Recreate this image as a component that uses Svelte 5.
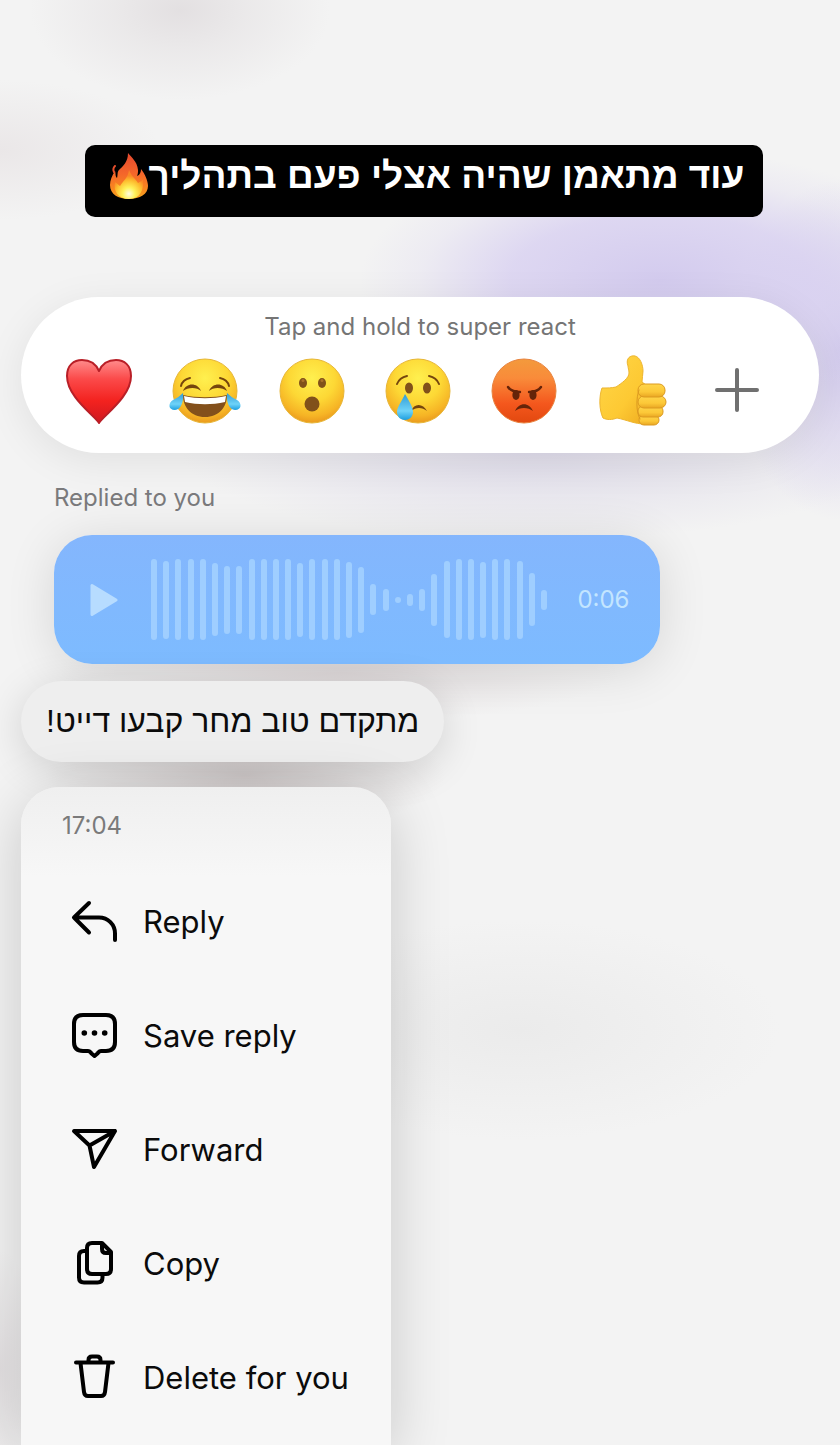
<script>
  const bars = [81, 78, 81, 81, 81, 73, 68, 68, 81, 81, 81, 81, 74, 81, 81, 81, 76, 66, 31, 22, 6, 12, 22, 52, 77, 81, 81, 76, 81, 81, 78, 53, 20];
  const actions = [
    { id: 'reply', label: 'Reply' },
    { id: 'save', label: 'Save reply' },
    { id: 'forward', label: 'Forward' },
    { id: 'copy', label: 'Copy' },
    { id: 'delete', label: 'Delete for you' }
  ];
  const reactions = ['Love', 'Laugh', 'Wow', 'Sad', 'Angry', 'Like'];
</script>

<svg class="defs" aria-hidden="true">
  <defs>
    <radialGradient id="face" cx="50%" cy="30%" r="72%">
      <stop offset="0" stop-color="#fff04f" /><stop offset=".5" stop-color="#fdd835" /><stop offset=".82" stop-color="#f6b425" /><stop offset="1" stop-color="#e8951c" />
    </radialGradient>
    <linearGradient id="mad" x1="0" y1="0" x2="0" y2="1">
      <stop offset="0" stop-color="#f39a3c" /><stop offset=".3" stop-color="#f98b3a" /><stop offset=".7" stop-color="#f4571d" /><stop offset="1" stop-color="#e2480f" />
    </linearGradient>
    <linearGradient id="heart" x1="0" y1="0" x2="0" y2="1">
      <stop offset="0" stop-color="#ff8c8c" /><stop offset=".3" stop-color="#fb4a4a" /><stop offset=".65" stop-color="#f3221f" /><stop offset="1" stop-color="#cf1820" />
    </linearGradient>
    <linearGradient id="tear" x1="0" y1="0" x2="0" y2="1">
      <stop offset="0" stop-color="#2f9bd6" /><stop offset=".65" stop-color="#6fd3f8" /><stop offset="1" stop-color="#1d9fe0" />
    </linearGradient>
    <linearGradient id="hand" x1="0" y1="0" x2="1" y2="1">
      <stop offset="0" stop-color="#ffd748" /><stop offset=".6" stop-color="#fdc933" /><stop offset="1" stop-color="#eda91f" />
    </linearGradient>
    <linearGradient id="finger" x1="0" y1="0" x2="0" y2="1">
      <stop offset="0" stop-color="#ffd54a" /><stop offset=".6" stop-color="#fcc838" /><stop offset="1" stop-color="#e9a623" />
    </linearGradient>
    <linearGradient id="flame" x1="0" y1="0" x2="0" y2="1">
      <stop offset="0" stop-color="#e5482e" /><stop offset=".45" stop-color="#f4662a" /><stop offset=".8" stop-color="#f98a1f" /><stop offset="1" stop-color="#f3a51e" />
    </linearGradient>
    <radialGradient id="core" cx="50%" cy="82%" r="62%">
      <stop offset="0" stop-color="#fffde0" /><stop offset=".35" stop-color="#fff25a" /><stop offset=".75" stop-color="#fdbb2d" /><stop offset="1" stop-color="#f98725" />
    </radialGradient>
  </defs>
</svg>

<main>
  <h1 class="caption" dir="rtl">
    <span>עוד מתאמן שהיה אצלי פעם בתהליך</span><svg class="fire" viewBox="0 0 40 48" role="img" aria-label="Fire">
      <path fill="url(#flame)" d="M19 1c3 4 9 8 10 17 0 2 0 4-1 6 3-1 4-4 4-7 4 5 7 12 7 17 0 8-8 13-19 13S1 42 1 33c0-5 2-9 5-14 1 3 0 5 2 7 1-3 0-6 2-8 4-4 9-8 9-17z" />
      <path fill="none" stroke="#e64f2d" stroke-width="2" stroke-linecap="round" d="M6 14c-2 2-2 4-1 6" />
      <path fill="url(#core)" d="M20 18c2 6 7 9 9 13l5-3c1 10-3 19-14 19S4 39 6 30c2 1 3 3 5 4 3-5 8-8 9-16z" />
    </svg>
  </h1>

  <section class="reactions" aria-label="Reactions">
    <p>Tap and hold to super react</p>
    <div class="row">
      {#each reactions as name}
        <button aria-label={name}>
          <svg viewBox="0 0 72 72" aria-hidden="true">
            {#if name === 'Love'}
              <path d="M36 68C31 60 4 42 4 21 4 10 11 5 19 5c8 0 14 4 17 11C39 9 45 5 53 5c8 0 15 5 15 16 0 21-27 39-32 47z" fill="url(#heart)" stroke="#b91f27" stroke-width="2" stroke-linejoin="round" />
            {:else if name === 'Like'}
              <g transform="translate(1)">
                <path d="M32 11C29 3 35 0 39 1c5 1 8 9 8 15 0 4-1 7-1 11l8 6-6 36c-9 0-17-4-27-6-5 2-10 2-14 0-4-8-4-22-1-30 6 0 9 0 14-1 6-4 13-9 13-14 0-3-1-5-1-7z" fill="url(#hand)" stroke="#edb530" />
                <g fill="url(#finger)" stroke="#dc9a20">
                  <rect x="43" y="60" width="20" height="10" rx="5" />
                  <rect x="42" y="51" width="25" height="11" rx="5" />
                  <rect x="42" y="41" width="28" height="12" rx="6" />
                  <rect x="42" y="29" width="27" height="13" rx="6" />
                </g>
                <path d="M43 35c-3 8-3 22 1 29" fill="none" stroke="#dc9a20" stroke-width="1" stroke-linecap="round" />
              </g>
            {:else}
              <circle cx="36" cy="36" r="32" fill={name === 'Angry' ? 'url(#mad)' : 'url(#face)'} stroke={name === 'Angry' ? '#e8833f' : '#e7b637'} />
              {#if name === 'Laugh'}
                <path fill="none" stroke="#75450d" stroke-width="2" stroke-linecap="round" d="M12 31c1-4 4-7 9-8M60 31c-1-4-4-7-9-8" />
                <path fill="#75450d" d="M14 36c3-8 14-9 18 0-4-4-13-4-18 0zM40 36c4-9 15-8 18 0-5-4-14-4-18 0z" />
                <path fill="#83501b" d="M14 40c13 3 31 3 44 0 0 12-8 22-22 22S14 52 14 40z" />
                <path fill="#fff" d="M15 41c13 3 29 3 42 0l-1 6c-13 3-27 3-40 0z" />
                <path fill="url(#tear)" d="M14 38c1 8-2 17-8 17-7 0-7-7-2-10 4-2 7-4 10-7zM58 38c-1 8 2 17 8 17 7 0 7-7 2-10-4-2-7-4-10-7z" />
              {:else if name === 'Wow'}
                <g fill="#81511a"><ellipse cx="27" cy="28" rx="4" ry="5" /><ellipse cx="46" cy="28" rx="4" ry="5" /><ellipse cx="36" cy="49" rx="7.500" ry="7.500" /></g>
                <g fill="#aa712b"><circle cx="27" cy="25.500" r="1.500" /><circle cx="46" cy="25.500" r="1.500" /></g>
              {:else if name === 'Sad'}
                <g fill="#81511a"><ellipse cx="27" cy="33" rx="4" ry="5.500" /><ellipse cx="45" cy="33" rx="4" ry="5.500" /></g>
                <path fill="none" stroke="#75450d" stroke-width="2" stroke-linecap="round" d="M15 29c2-5 5-7 10-8M57 29c-2-5-5-7-10-8" />
                <path fill="#75450d" d="M29 56c3-8 12-8 16 0-5-4-11-4-16 0z" />
                <path fill="url(#tear)" d="M23 39c4 7 8 13 8 18 0 5-4 8-8 8s-8-3-8-8 5-11 8-18z" />
              {:else}
                <g fill="#652409"><ellipse cx="28" cy="40" rx="3.600" ry="5" /><ellipse cx="45" cy="40" rx="3.600" ry="5" /></g>
                <path fill="none" stroke="#652409" stroke-width="2.400" stroke-linecap="round" d="M20 32c2 3 6 5 12 5M53 32c-2 3-6 5-12 5" />
                <path fill="#652409" d="M27 56c4-9 14-9 18 0-5-4-13-4-18 0z" />
              {/if}
            {/if}
          </svg>
        </button>
      {/each}
      <button aria-label="More reactions">
        <svg viewBox="0 0 72 72" aria-hidden="true"><path fill="none" stroke="#707070" stroke-width="4" stroke-linecap="round" d="M16 35h40M36 15v40" /></svg>
      </button>
    </div>
  </section>

  <p class="replied">Replied to you</p>
  <section class="voice" aria-label="Voice message">
    <button class="play" aria-label="Play">
      <svg viewBox="0 0 28 34" aria-hidden="true"><path fill="#b7dcff" stroke="#b7dcff" stroke-width="3" stroke-linejoin="round" d="M2 2.500v29L26 17z" /></svg>
    </button>
    <div class="wave" aria-hidden="true">
      {#each bars as h}<i style="height: {h}px"></i>{/each}
    </div>
    <time>0:06</time>
  </section>

  <p class="message" dir="rtl">מתקדם טוב מחר קבעו דייט!</p>

  <section class="menu" aria-label="Message actions">
    <time>17:04</time>
    {#each actions as a}
      <button>
        <svg viewBox="0 0 48 48" aria-hidden="true">
          {#if a.id === 'reply'}
            <path d="M19 6 4 20.500 19 35.500M4 20.500h25c9 0 16 7 16 16V43" />
          {:else if a.id === 'save'}
            <path d="M13 4h23q9 0 9 9v18q0 9-9 9h-5c-2 0-2 1-3.500 2.500L24.500 45l-3-2.500C20 41 20 40 18 40h-5q-9 0-9-9V13q0-9 9-9z" />
            <g class="dots"><circle cx="14.300" cy="22" r="2.800" /><circle cx="24.500" cy="22" r="2.800" /><circle cx="34.700" cy="22" r="2.800" /></g>
          {:else if a.id === 'forward'}
            <path d="M4 6h41L24 42l-4.500-21.500zM19.500 20.500 45 6" />
          {:else if a.id === 'copy'}
            <path d="M22 4h10l9 9v17q0 5-5 5H22q-5 0-5-5V9q0-5 5-5zM32 4v6q0 4 4 4h5M17 12h-3q-5 0-5 5v21.500q0 5 5 5h13.500q5 0 5-5V35" />
          {:else}
            <path d="M6 9.500h37M18.500 9V7q0-3.500 3.500-3.500h5q3.500 0 3.500 3.500v2M10.500 10l3.500 29q.5 4 4 4h13q3.500 0 4-4l3.500-29" />
          {/if}
        </svg>
        <span>{a.label}</span>
      </button>
    {/each}
  </section>
</main>

<style>
  :global(body) {
    margin: 0;
  }
  .defs {
    position: absolute;
    width: 0;
    height: 0;
  }
  main {
    box-sizing: border-box;
    min-height: 100vh;
    padding: 145px 21px 0;
    display: flex;
    flex-direction: column;
    align-items: flex-start;
    overflow: hidden;
    font-family: Inter, "Open Sans", "Liberation Sans", sans-serif;
    color: #0b0b0b;
    background:
      radial-gradient(ellipse 150px 90px at 180px 10px, #dfdbddcc 0%, #dfdbdd66 45%, #dfdbdd00 100%),
      radial-gradient(ellipse 160px 70px at 0 150px, #e8e4e5cc 0%, #e8e4e500 100%),
      radial-gradient(ellipse 300px 130px at 660px 280px, #d3cbee 0%, #d8d0f1cc 50%, #dcd6f044 80%, #dcd6f000 100%),
      radial-gradient(ellipse 110px 170px at 840px 350px, #cfc7eb 0%, #d3cbed88 50%, #d3cbed00 100%),
      radial-gradient(ellipse 360px 90px at 540px 450px, #d8d4e6cc 0%, #d8d4e666 50%, #d8d4e600 100%),
      radial-gradient(ellipse 200px 60px at 245px 775px, #c4bbbbaa 0%, #c4bbbb55 50%, #c4bbbb00 100%),
      radial-gradient(ellipse 280px 50px at 340px 672px, #d8ced088 0%, #d8ced000 100%),
      radial-gradient(ellipse 260px 110px at 520px 1030px, #ebebeb 0%, #ebebeb00 100%),
      radial-gradient(ellipse 40px 120px at 0 1370px, #d6d0d388 0%, #d6d0d300 100%),
      #f3f3f3;
  }
  p,
  h1 {
    margin: 0;
  }
  button {
    border: 0;
    padding: 0;
    background: none;
    color: inherit;
    font: inherit;
    cursor: pointer;
  }
  svg {
    display: block;
  }
  .caption {
    align-self: center;
    box-sizing: border-box;
    display: flex;
    align-items: center;
    min-height: 72px;
    margin-left: 8px;
    padding: 0 19px 10px 24px;
    border-radius: 10px;
    background: #000;
    color: #fff;
    font: 700 37px/60px "Liberation Sans", Arial, sans-serif;
  }
  .fire {
    width: 40px;
    height: 48px;
    flex: none;
  }
  .reactions {
    box-sizing: border-box;
    align-self: stretch;
    margin-top: 80px;
    height: 156px;
    padding: 14px 46px 0 42px;
    border-radius: 78px;
    background: #fff;
    box-shadow: 0 8px 40px rgba(0, 0, 0, 0.08);
  }
  .reactions p {
    text-align: center;
    margin-left: 4px;
    font-size: 24px;
    line-height: 32px;
    color: #757575;
  }
  .row {
    display: flex;
    justify-content: space-between;
    margin-top: 12px;
  }
  .row svg {
    width: 72px;
    height: 72px;
    overflow: visible;
  }
  .replied {
    margin: 29px 0 0 33px;
    font-size: 24px;
    line-height: 32px;
    color: #7a7a7c;
  }
  .voice {
    box-sizing: border-box;
    width: 76%;
    height: 129px;
    margin: 21px 0 0 33px;
    padding: 0 31px 0 36px;
    display: flex;
    align-items: center;
    border-radius: 38px;
    background: linear-gradient(#84b6fd, #7dbbff);
    box-shadow: 0 6px 50px rgba(0, 0, 0, 0.12);
  }
  .play svg {
    width: 28px;
    height: 34px;
  }
  .wave {
    flex: 1;
    display: flex;
    align-items: center;
    justify-content: space-between;
    margin: 0 30px 0 33px;
  }
  .wave i {
    width: 6px;
    border-radius: 3px;
    background: #9fceff;
  }
  .voice time {
    font-size: 24px;
    color: #c3e5ff;
  }
  .message {
    margin-top: 17px;
    padding: 0 25px;
    border-radius: 41px;
    background: #eee;
    font: 32px/81px "Liberation Sans", Arial, sans-serif;
    box-shadow: 0 8px 40px rgba(0, 0, 0, 0.14);
  }
  .menu {
    box-sizing: border-box;
    flex: 1;
    width: 370px;
    max-width: 100%;
    margin-top: 25px;
    display: flex;
    flex-direction: column;
    border-radius: 38px 38px 0 0;
    background: linear-gradient(#efefef, #f7f7f7 90px);
    box-shadow: 0 12px 60px rgba(0, 0, 0, 0.18);
  }
  .menu time {
    padding-left: 41px;
    font-size: 24px;
    line-height: 77px;
    color: #7a7a7a;
  }
  .menu button {
    display: flex;
    align-items: center;
    gap: 25px;
    height: 114px;
    padding-left: 49px;
    font-size: 31px;
    text-align: left;
    white-space: nowrap;
  }
  .menu svg {
    width: 48px;
    height: 48px;
    flex: none;
    fill: none;
    stroke: #000;
    stroke-width: 4;
    stroke-linecap: round;
    stroke-linejoin: round;
  }
  .menu .dots {
    fill: #000;
    stroke: none;
  }
</style>
